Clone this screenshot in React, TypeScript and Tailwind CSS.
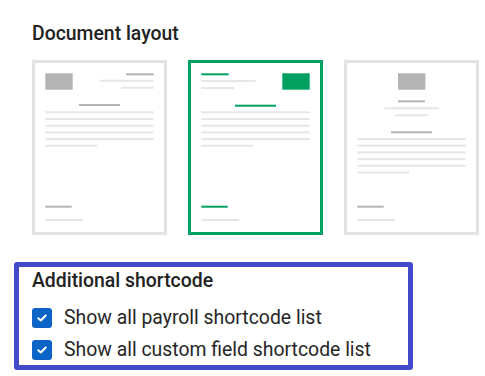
import React from 'react';

type Bar = { x1: number; x2: number; y: number; tone: 'dark' | 'light' | 'accent' };
type Box = { x: number; y: number; tone: 'dark' | 'accent' };

interface Layout {
  id: string;
  bars: Bar[];
  box: Box;
}

const DARK = '#b4b4b4';
const LIGHT = '#e6e6e6';
const GREEN = '#02a161';

const body = (start: number): Bar[] => [
  ...[0, 1, 2, 3, 4].map((i) => ({ x1: 10.3, x2: 118.7, y: start + i * 6.7, tone: 'light' as const })),
  { x1: 10.3, x2: 62, y: start + 5 * 6.7, tone: 'light' },
];

const layouts: Layout[] = [
  {
    id: 'classic',
    box: { x: 10.3, y: 10.3, tone: 'dark' },
    bars: [
      { x1: 91, x2: 118.7, y: 11.3, tone: 'dark' },
      { x1: 64.7, x2: 118.7, y: 17.7, tone: 'light' },
      { x1: 86, x2: 118.7, y: 24.7, tone: 'light' },
      { x1: 44, x2: 85, y: 42, tone: 'dark' },
      ...body(49.3),
      { x1: 10.3, x2: 36.7, y: 143.7, tone: 'dark' },
      { x1: 10.3, x2: 48.3, y: 157, tone: 'light' },
    ],
  },
  {
    id: 'modern',
    box: { x: 91.3, y: 10.3, tone: 'accent' },
    bars: [
      { x1: 10.3, x2: 37.7, y: 11.3, tone: 'accent' },
      { x1: 10.3, x2: 64.7, y: 18, tone: 'light' },
      { x1: 10.3, x2: 43, y: 25, tone: 'light' },
      { x1: 44, x2: 85, y: 42.7, tone: 'accent' },
      ...body(49.3),
      { x1: 10.3, x2: 36.7, y: 143.7, tone: 'accent' },
      { x1: 10.3, x2: 48.3, y: 157, tone: 'light' },
    ],
  },
  {
    id: 'centered',
    box: { x: 51, y: 10.3, tone: 'dark' },
    bars: [
      { x1: 51, x2: 78, y: 38.3, tone: 'dark' },
      { x1: 37.3, x2: 91.7, y: 45.3, tone: 'light' },
      { x1: 48, x2: 80.7, y: 52.3, tone: 'light' },
      { x1: 44, x2: 85, y: 69.3, tone: 'dark' },
      ...body(76),
      { x1: 10.3, x2: 36.7, y: 143.7, tone: 'dark' },
      { x1: 10.3, x2: 48.3, y: 157, tone: 'light' },
    ],
  },
];

function fillFor(tone: string, selected: boolean) {
  if (tone === 'light') return LIGHT;
  if (tone === 'accent' && selected) return GREEN;
  return DARK;
}

function LayoutCard({ layout, selected }: { layout: Layout; selected: boolean }) {
  return (
    <div
      className={`w-[135px] h-[175px] border-[3px] bg-white shrink-0 ${
        selected ? 'border-[#02a161]' : 'border-[#e3e3e3]'
      }`}
    >
      <svg width="129" height="169" viewBox="0 0 129 169">
        <rect x={layout.box.x} y={layout.box.y} width="27.4" height="16.4" fill={fillFor(layout.box.tone, selected)} />
        {layout.bars.map((b, i) => (
          <rect key={i} x={b.x1} y={b.y - 1} width={b.x2 - b.x1} height="2" fill={fillFor(b.tone, selected)} />
        ))}
      </svg>
    </div>
  );
}

function Checkbox({ label }: { label: string }) {
  return (
    <label className="flex items-center gap-3 h-6">
      <span className="w-5 h-5 rounded-[3px] bg-[#0b64c6] flex items-center justify-center">
        <svg width="10" height="8" viewBox="0 0 10 8">
          <path d="M1.3 4.2 L3.8 6.5 L8.7 1.5" fill="none" stroke="white" strokeWidth="2" strokeLinecap="round" strokeLinejoin="round" />
        </svg>
      </span>
      <span className="text-[19.4px] leading-6 text-[#262626]">{label}</span>
    </label>
  );
}

export default function App() {
  return (
    <div className="w-[485px] h-[376px] bg-white font-['Roboto',sans-serif] overflow-hidden">
      <div className="pl-8 pt-[22px]">
        <h3 className="text-[19.4px] leading-6 font-medium text-[#222]">Document layout</h3>
        <div className="flex gap-[21px] mt-[14px]">
          {layouts.map((l) => (
            <LayoutCard key={l.id} layout={l} selected={l.id === 'modern'} />
          ))}
        </div>
      </div>

      <div className="ml-[14px] mt-[27px] w-[399px] h-[108px] border-[5px] border-[#4449cc] rounded-[3px] pl-[13px] pt-[2px]">
        <h3 className="text-[19.4px] leading-6 font-medium text-[#222]">Additional shortcode</h3>
        <div className="mt-[13px] space-y-2">
          <Checkbox label="Show all payroll shortcode list" />
          <Checkbox label="Show all custom field shortcode list" />
        </div>
      </div>
    </div>
  );
}
